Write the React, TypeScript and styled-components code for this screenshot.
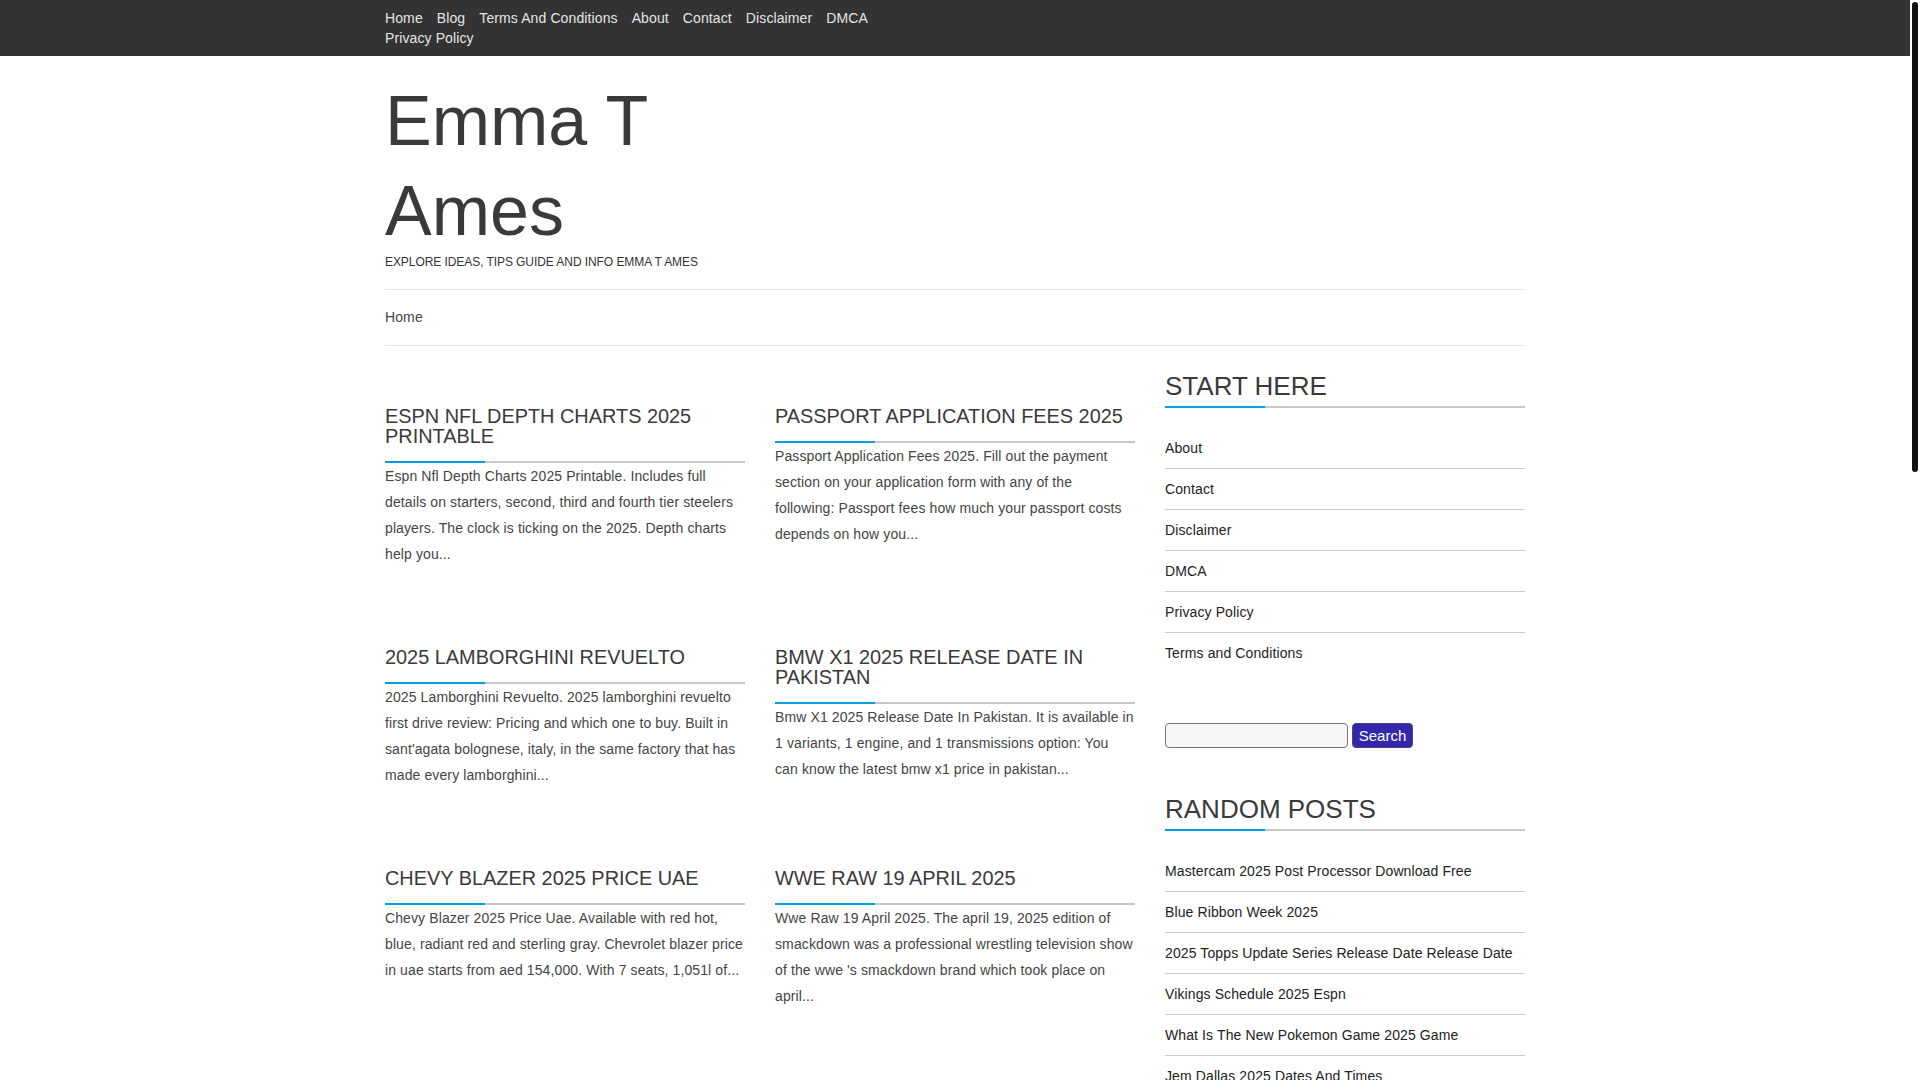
import { createGlobalStyle, styled } from "styled-components";

const GlobalStyle = createGlobalStyle`
  html,
  body {
    height: 100%;
    overflow: hidden;
  }

  body {
    margin: 0;
    background: #fff;
    color: #444;
    font-family: "Liberation Sans", Arial, sans-serif;
    font-size: 14px;
    letter-spacing: 0.11px;
  }

  a {
    color: inherit;
    text-decoration: none;
  }
`;

const Shell = styled.div`
  display: flex;
  height: 100vh;
`;

const Scroller = styled.div`
  flex: 1;
  min-width: 0;
  overflow-y: auto;
  scrollbar-width: none;
`;

const ScrollTrack = styled.div`
  flex: none;
  width: 10px;
  padding: 2px;
  box-sizing: border-box;
  background: #fff;
`;

const ScrollThumb = styled.div`
  height: 470px;
  background: #111;
  border-radius: 3px;
`;

const Page = styled.div`
  min-height: 2461px;
`;

const TopBar = styled.div`
  background: #333;
  padding: 8px 0;
`;

const Container = styled.div`
  width: 1140px;
  margin: 0 auto;
`;

const TopNav = styled.nav`
  width: 570px;
  display: flex;
  flex-wrap: wrap;
  column-gap: 14px;
  line-height: 20px;
  color: #e5e5e5;
`;

const SiteHead = styled.header`
  width: 360px;
  padding: 20px 0 21px;
`;

const SiteTitle = styled.h1`
  margin: 0;
  font-size: 70px;
  font-weight: 400;
  line-height: 90px;
  letter-spacing: 0;
  color: #3a3a3a;
`;

const Tagline = styled.p`
  margin: 0;
  font-size: 12px;
  line-height: 12px;
  letter-spacing: -0.07px;
  white-space: nowrap;
  text-transform: uppercase;
  color: #333;
`;

const MainMenu = styled.nav`
  border-top: 1px solid #e5e5e5;
  border-bottom: 1px solid #e5e5e5;
  line-height: 55px;
`;

const Columns = styled.div`
  display: grid;
  grid-template-columns: 750px 360px;
  column-gap: 30px;
`;

const PostGrid = styled.main`
  display: grid;
  grid-template-columns: 360px 360px;
  column-gap: 30px;
  row-gap: 80px;
  align-content: start;
  padding-top: 60px;
`;

const PostTitle = styled.h2`
  position: relative;
  margin: 0;
  padding-bottom: 15px;
  border-bottom: 2px solid #c8c8c8;
  font-size: 19.9px;
  font-weight: 400;
  line-height: 20px;
  letter-spacing: 0;
  color: #3a3a3a;
  text-transform: uppercase;

  &::after {
    content: "";
    position: absolute;
    left: 0;
    bottom: -2px;
    width: 100px;
    height: 2px;
    background: #00a0e4;
  }
`;

const PostBody = styled.p`
  margin: 0;
  line-height: 26px;
`;

const Sidebar = styled.aside`
  padding-top: 25px;
`;

const WidgetTitle = styled.h3`
  position: relative;
  margin: 0;
  padding-bottom: 5px;
  border-bottom: 2px solid #c8c8c8;
  font-size: 26px;
  font-weight: 400;
  line-height: 30px;
  letter-spacing: 0;
  color: #3a3a3a;
  text-transform: uppercase;

  &::after {
    content: "";
    position: absolute;
    left: 0;
    bottom: -2px;
    width: 100px;
    height: 2px;
    background: #00a0e4;
  }
`;

const LinkList = styled.ul`
  margin: 20px 0 0;
  padding: 0;
  list-style: none;
`;

const LinkItem = styled.li`
  line-height: 40px;
  color: #222;
  border-bottom: 1px solid #ccc;

  &:last-child {
    border-bottom: none;
  }
`;

const SearchForm = styled.form`
  display: flex;
  gap: 4px;
  margin: 50px 0 46px;
`;

const SearchInput = styled.input`
  box-sizing: border-box;
  width: 183px;
  height: 25px;
  padding: 1px 2px;
  background: #f6f6f6;
  border: 1px solid #767676;
  border-radius: 4px;
`;

const SearchButton = styled.button`
  box-sizing: border-box;
  width: 61px;
  height: 25px;
  padding: 0;
  background: #3328ab;
  border: 1px solid #4a4a7a;
  border-radius: 4px;
  color: #fff;
  font-family: inherit;
  font-size: 15px;
`;

const topLinks = ["Home", "Blog", "Terms And Conditions", "About", "Contact", "Disclaimer", "DMCA", "Privacy Policy"];

const posts = [
  {
    title: "ESPN NFL Depth Charts 2025 Printable",
    body: "Espn Nfl Depth Charts 2025 Printable. Includes full details on starters, second, third and fourth tier steelers players. The clock is ticking on the 2025. Depth charts help you...",
  },
  {
    title: "Passport Application Fees 2025",
    body: "Passport Application Fees 2025. Fill out the payment section on your application form with any of the following: Passport fees how much your passport costs depends on how you...",
  },
  {
    title: "2025 Lamborghini Revuelto",
    body: "2025 Lamborghini Revuelto. 2025 lamborghini revuelto first drive review: Pricing and which one to buy. Built in sant'agata bolognese, italy, in the same factory that has made every lamborghini...",
  },
  {
    title: "BMW X1 2025 Release Date In Pakistan",
    body: "Bmw X1 2025 Release Date In Pakistan. It is available in 1 variants, 1 engine, and 1 transmissions option: You can know the latest bmw x1 price in pakistan...",
  },
  {
    title: "Chevy Blazer 2025 Price Uae",
    body: "Chevy Blazer 2025 Price Uae. Available with red hot, blue, radiant red and sterling gray. Chevrolet blazer price in uae starts from aed 154,000. With 7 seats, 1,051l of...",
  },
  {
    title: "WWE Raw 19 April 2025",
    body: "Wwe Raw 19 April 2025. The april 19, 2025 edition of smackdown was a professional wrestling television show of the wwe 's smackdown brand which took place on april...",
  },
];

const startLinks = ["About", "Contact", "Disclaimer", "DMCA", "Privacy Policy", "Terms and Conditions"];

const randomPosts = [
  "Mastercam 2025 Post Processor Download Free",
  "Blue Ribbon Week 2025",
  "2025 Topps Update Series Release Date Release Date",
  "Vikings Schedule 2025 Espn",
  "What Is The New Pokemon Game 2025 Game",
  "Jem Dallas 2025 Dates And Times",
];

export default function App() {
  return (
    <Shell>
      <GlobalStyle />
      <Scroller>
        <Page>
          <TopBar>
            <Container>
              <TopNav>
                {topLinks.map((label) => (
                  <a key={label} href="#">
                    {label}
                  </a>
                ))}
              </TopNav>
            </Container>
          </TopBar>
          <Container>
            <SiteHead>
              <SiteTitle>Emma T Ames</SiteTitle>
              <Tagline>Explore Ideas, Tips Guide and Info Emma T Ames</Tagline>
            </SiteHead>
            <MainMenu>
              <a href="#">Home</a>
            </MainMenu>
            <Columns>
              <PostGrid>
                {posts.map((post) => (
                  <article key={post.title}>
                    <PostTitle>{post.title}</PostTitle>
                    <PostBody>{post.body}</PostBody>
                  </article>
                ))}
              </PostGrid>
              <Sidebar>
                <WidgetTitle>Start Here</WidgetTitle>
                <LinkList>
                  {startLinks.map((label) => (
                    <LinkItem key={label}>
                      <a href="#">{label}</a>
                    </LinkItem>
                  ))}
                </LinkList>
                <SearchForm onSubmit={(e) => e.preventDefault()}>
                  <SearchInput type="text" />
                  <SearchButton type="submit">Search</SearchButton>
                </SearchForm>
                <WidgetTitle>Random Posts</WidgetTitle>
                <LinkList>
                  {randomPosts.map((label) => (
                    <LinkItem key={label}>
                      <a href="#">{label}</a>
                    </LinkItem>
                  ))}
                </LinkList>
              </Sidebar>
            </Columns>
          </Container>
        </Page>
      </Scroller>
      <ScrollTrack>
        <ScrollThumb />
      </ScrollTrack>
    </Shell>
  );
}
